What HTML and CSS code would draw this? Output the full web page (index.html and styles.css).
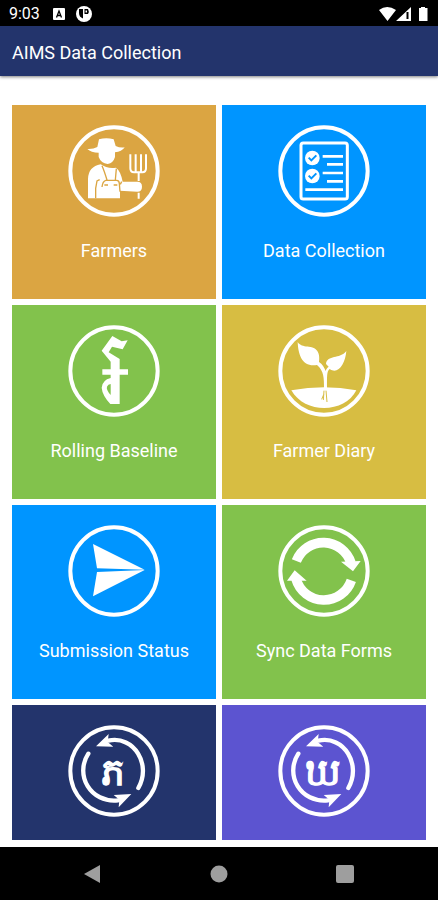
FILE: index.html
```html
<!DOCTYPE html>
<html lang="en">
<head>
    <meta charset="utf-8">
    <meta name="viewport" content="width=device-width,initial-scale=1">
    <title>AIMS Data Collection</title>
    <link rel="stylesheet" href="styles.css">
</head>
<body>
    <div class="status-bar">
        <span class="clock">9:03</span>
        <svg class="status-icon" viewBox="0 0 16 16">
            <rect x="2" y="2" width="12" height="12" rx="1" fill="#fff"/>
            <path d="M5.500 11.500 8 5l2.500 6.500M6.500 9.500h3" fill="none" stroke="#000" stroke-width="1.300"/>
        </svg>
        <svg class="status-icon" viewBox="0 0 16 16">
            <circle cx="8" cy="8" r="8" fill="#fff"/>
            <path d="M3 3h4v9.500Q3 11 3 7zM8.500 3H12q1.500 2.500 0 5H8.500z" fill="#000"/>
            <path d="M9.500 4.500h1.500v2H9.500z" fill="#fff"/>
        </svg>
        <svg class="signal-icons" viewBox="0 0 50 16">
            <path d="M0 4Q8-2 17 4L8.500 15zM32 1v14H17z" fill="#fff"/>
            <path d="M28.500 6v7" stroke="#000" stroke-width="2"/>
            <path d="M42 1h4v1h2.500v13H40V2h2z" fill="#fff"/>
        </svg>
    </div>

    <header class="app-bar">
        <h1 class="app-title">AIMS Data Collection</h1>
    </header>

    <main class="tiles">
        <button class="tile farmers" type="button">
            <svg class="tile-icon" viewBox="44 29 276 276">
                <circle class="ring" cx="182" cy="167" r="131"/>
                <path class="solid" d="M102 101q18 1 30-6l5-23q22-7 44 0l6 20q13 6 27 4-9 14-29 15v14q-5 18-22 21-20-2-27-21v-13q-23 0-34-11z"/>
                <path class="solid" d="M104 249v-58q1-37 38-44 20 14 46 10 14 10 20 42h44q14 0 14 15t-14 15l-52-3v23z"/>
                <path class="cut" stroke-width="4" d="M146 151q7 16 15 43M189 160l-3 34M127 249v-30l4-22 8-4M205 199l-4 8M157 195h33q8 0 8 10l2 24M157 195q-9 3-11 20M153 209h11M181 209h11"/>
                <path class="line" stroke-width="6" d="M231 117v42q0 12 11 12h25q11 0 11-12v-42M247 117v51M263 117v51M256 170v27M256 232v18"/>
            </svg>
            <span class="tile-label">Farmers</span>
        </button>
        <button class="tile collection" type="button">
            <svg class="tile-icon" viewBox="44 29 276 276">
                <circle class="ring" cx="182" cy="167" r="131"/>
                <rect class="line" stroke-width="9" x="113" y="83" width="139" height="168" rx="7"/>
                <circle class="solid" cx="147" cy="128" r="22"/>
                <circle class="solid" cx="147" cy="182" r="22"/>
                <path class="cut" stroke-width="6" d="M136 127l8 8 15-15M136 181l8 8 15-15"/>
                <path class="line" stroke-width="8" d="M178 123h61M191 147h48M178 173h61M191 198h48M126 223h113"/>
            </svg>
            <span class="tile-label">Data Collection</span>
        </button>
        <button class="tile baseline" type="button">
            <svg class="tile-icon" viewBox="44 29 276 276">
                <circle class="ring" cx="182" cy="167" r="131"/>
                <path class="solid" d="M145 106l32-44 28 16 18-3-15 27-32-8-10 17 33 20v31h25v16h-25v88h-28q-24-26-26-49 2-23 27-29v-10h-25v-16h25v-23z"/>
                <path class="hole" d="M172 206v33q-14-16-11-25 3-8 11-8z"/>
            </svg>
            <span class="tile-label">Rolling Baseline</span>
        </button>
        <button class="tile diary" type="button">
            <svg class="tile-icon" viewBox="44 29 276 276">
                <circle class="ring" cx="182" cy="167" r="131"/>
                <path class="solid" d="M103 80c12 21 47 7 59 27 7 11 6 24 5 33 10 6 16 17 20 27 2-8 5-9 9-13l-8-8c4-29 41-13 61-39-3 39-25 72-50 54-9 7-8 23-8 57h-9c0-29 0-51-21-69-43 7-56-27-58-69z"/>
                <path class="solid" d="M84 225q100-19 195 0c-34 69-154 73-195 0z"/>
                <path class="cut" stroke-width="3" d="M182 226l-2 28M188 226l3 34M181 238l-6 14"/>
            </svg>
            <span class="tile-label">Farmer Diary</span>
        </button>
        <button class="tile submission" type="button">
            <svg class="tile-icon" viewBox="44 29 276 276">
                <circle class="ring" cx="182" cy="167" r="131"/>
                <path class="solid" d="M119 86l155 77-143-4zM131 170l143-6-155 79z"/>
            </svg>
            <span class="tile-label">Submission Status</span>
        </button>
        <button class="tile sync" type="button">
            <svg class="tile-icon" viewBox="44 29 276 276">
                <circle class="ring" cx="182" cy="167" r="131"/>
                <path class="line" stroke-width="29" d="M99 137A87 87 0 0 1 263 143M264 195A87 87 0 0 1 98 191"/>
                <path class="solid" d="M233 139l59-2-23 31zM71 196l23-31 36 31z"/>
            </svg>
            <span class="tile-label">Sync Data Forms</span>
        </button>
        <button class="tile navy" type="button">
            <svg class="tile-icon" viewBox="44 29 276 276">
                <circle class="ring" cx="182" cy="167" r="131"/>
                <path class="line round" stroke-width="13" d="M165 76C243 59 295 149 255 218M105 115C63 179 112 264 194 255"/>
                <path class="solid" d="M128 93l38-37-3 24 17 14zM234 236l-38 40 2-23-17-14z"/>
                <text class="letter" x="180" y="210">ភ</text>
            </svg>
        </button>
        <button class="tile purple" type="button">
            <svg class="tile-icon" viewBox="44 29 276 276">
                <circle class="ring" cx="182" cy="167" r="131"/>
                <path class="line round" stroke-width="13" d="M165 76C243 59 295 149 255 218M105 115C63 179 112 264 194 255"/>
                <path class="solid" d="M128 93l38-37-3 24 17 14zM234 236l-38 40 2-23-17-14z"/>
                <text class="letter" x="180" y="210">ឃ</text>
            </svg>
        </button>
    </main>

    <nav class="nav-bar">
        <button class="nav-button" type="button" aria-label="Back">
            <svg class="nav-icon" viewBox="0 0 20 20"><path d="M1 10 17 1v18z"/></svg>
        </button>
        <button class="nav-button" type="button" aria-label="Home">
            <svg class="nav-icon" viewBox="0 0 20 20"><circle cx="10" cy="10" r="8.500"/></svg>
        </button>
        <button class="nav-button" type="button" aria-label="Recent apps">
            <svg class="nav-icon" viewBox="0 0 20 20"><rect x="1" y="1" width="18" height="18" rx="2"/></svg>
        </button>
    </nav>
</body>
</html>
```
FILE: styles.css
```css
* {
    box-sizing: border-box;
}

body {
    display: flex;
    flex-direction: column;

    height: 100vh;
    margin: 0;

    background-color: #ffffff;

    font-family: Roboto, "Noto Sans", sans-serif;
    color: #ffffff;
}

button {
    margin: 0;
    padding: 0;
    border: 0;

    background: none;

    font: inherit;
    color: inherit;
}

/* status bar */
.status-bar {
    display: flex;
    flex: none;
    align-items: center;
    gap: 9px;

    height: 26px;
    padding: 2px 9px 0;

    background-color: #000000;
}

.clock {
    margin-right: 2px;

    font-size: 16px;
    line-height: 24px;
}

.status-icon {
    width: 16px;
    height: 16px;
}

.signal-icons {
    width: 50px;
    height: 16px;
    margin-left: auto;
}

/* app bar */
.app-bar {
    display: flex;
    flex: none;
    align-items: center;

    height: 50px;
    padding: 4px 12px 0;

    background-color: #23346c;
    box-shadow: 0 1px 3px rgba(0, 0, 0, 0.5);
}

.app-title {
    margin: 0;

    font-size: 18px;
    font-weight: 400;
    line-height: 24px;
}

/* tiles */
.tiles {
    display: grid;
    flex: 1;
    grid-template-columns: 1fr 1fr;
    grid-template-rows: repeat(3, 194px) 1fr;
    gap: 6px;

    min-height: 0;
    padding: 29px 12px 7px;

    overflow: hidden;
}

.tile {
    display: flex;
    flex-direction: column;
    align-items: center;
    gap: 22px;

    padding-top: 20px;

    background-color: var(--tile);
}

.farmers { --tile: #dba542; }
.collection { --tile: #0095ff; }
.baseline { --tile: #82c24c; }
.diary { --tile: #d7bd42; }
.submission { --tile: #0095ff; }
.sync { --tile: #82c24c; }
.navy { --tile: #23346c; }
.purple { --tile: #5c54d0; }

.tile-icon {
    flex: none;

    width: 92px;
    height: 92px;
}

.tile-label {
    font-size: 18px;
    line-height: 24px;
}

.ring {
    fill: none;
    stroke: #ffffff;
    stroke-width: 12;
}

.solid {
    fill: #ffffff;
}

.line {
    fill: none;
    stroke: #ffffff;
}

.round {
    stroke-linecap: round;
}

.cut {
    fill: none;
    stroke: var(--tile);
}

.hole {
    fill: var(--tile);
}

.letter {
    fill: #ffffff;
    stroke: #ffffff;
    stroke-width: 4;

    font-size: 112px;
    text-anchor: middle;
}

/* navigation bar */
.nav-bar {
    display: flex;
    flex: none;
    justify-content: space-around;

    height: 53px;
    padding: 0 30px;

    background-color: #000000;
}

.nav-button {
    flex: 1;
}

.nav-icon {
    display: block;

    width: 20px;
    height: 20px;
    margin: 0 auto;

    fill: #9e9e9e;
}
```
